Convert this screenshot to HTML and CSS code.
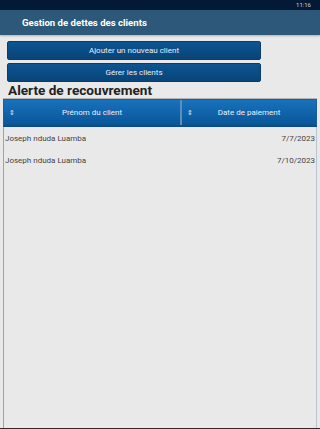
FILE: index.html
```html
<!DOCTYPE html>
<html lang="fr">
<head>
<meta charset="utf-8">
<title>Gestion de dettes des clients</title>
<link rel="stylesheet" href="styles.css">
</head>
<body>
<div class="screen">
  <div class="status"><span class="time">11:16</span></div>
  <div class="appbar"><span class="title">Gestion de dettes des clients</span></div>
  <div class="content">
    <div class="actions">
      <button class="btn">Ajouter un nouveau client</button>
      <button class="btn">Gérer les clients</button>
    </div>
    <h2 class="heading">Alerte de recouvrement</h2>
    <div class="grid">
      <div class="grid-head">
        <div class="col col-name"><span class="sort">&#8661;</span><span class="col-label">Prénom du client</span></div>
        <div class="col col-date"><span class="sort">&#8661;</span><span class="col-label">Date de paiement</span></div>
      </div>
      <div class="grid-body">
        <div class="row"><span class="name">Joseph nduda Luamba</span><span class="date">7/7/2023</span></div>
        <div class="row"><span class="name">Joseph nduda Luamba</span><span class="date">7/10/2023</span></div>
      </div>
    </div>
  </div>
</div>
</body>
</html>
```
FILE: styles.css
```css
html, body {
  margin: 0;
  padding: 0;
  height: 100%;
}
body {
  font-family: Roboto, "Liberation Sans", sans-serif;
  background: #e9e9e9;
}
.screen {
  height: 429px;
  display: flex;
  flex-direction: column;
  border-bottom: 1px solid #2a2a2a;
  box-sizing: border-box;
}
.status {
  height: 10px;
  background: #021a36;
  display: flex;
  justify-content: flex-end;
  align-items: center;
  padding-right: 9px;
}
.time {
  color: #c9d2dc;
  font-size: 6px;
  line-height: 10px;
}
.appbar {
  height: 25px;
  background: #2d5879;
  display: flex;
  align-items: center;
  padding-left: 22px;
  box-shadow: 0 1px 2px rgba(0,0,0,0.25);
}
.title {
  color: #fff;
  font-weight: bold;
  font-size: 9.6px;
}
.content {
  flex: 1;
  display: flex;
  flex-direction: column;
  padding-top: 6px;
}
.actions {
  display: flex;
  flex-direction: column;
  gap: 3px;
  margin-left: 7px;
  width: 254px;
}
.btn {
  height: 19px;
  border: 1px solid #0a3c6c;
  border-radius: 2px;
  background: linear-gradient(#0d5591, #084478);
  color: #e8eef5;
  font-family: Roboto, "Liberation Sans", sans-serif;
  font-size: 8px;
  padding: 0;
}
.heading {
  margin: 1px 0 0 8px;
  font-size: 13.6px;
  line-height: 15px;
  font-weight: bold;
  color: #222;
}
.grid {
  flex: 1;
  margin: 0 3px 0 3px;
  border-top: 1px solid #b5b5b5;
  display: flex;
  flex-direction: column;
}
.grid-head {
  display: flex;
  height: 25px;
  border: 1px solid #1a5f99;
  border-bottom: 2px solid #0e4c87;
  background: linear-gradient(#1872bc, #0a5598);
  color: #e8f0f8;
  font-size: 8px;
}
.col {
  display: flex;
  align-items: center;
  position: relative;
}
.col-name {
  width: 176px;
  border-right: 2px solid #5b8fbf;
}
.col-date {
  flex: 1;
}
.sort {
  font-size: 7px;
  width: 12px;
  padding-left: 5px;
  color: #dfe9f3;
}
.col-label {
  flex: 1;
  text-align: center;
  padding-right: 17px;
}
.grid-body {
  flex: 1;
  border-left: 1px solid #9aa4ae;
  border-right: 1px solid #b8c4d0;
}
.row {
  display: flex;
  justify-content: space-between;
  height: 22px;
  align-items: center;
  padding: 0 1px 0 1px;
  font-size: 8px;
  color: #444;
}
```
